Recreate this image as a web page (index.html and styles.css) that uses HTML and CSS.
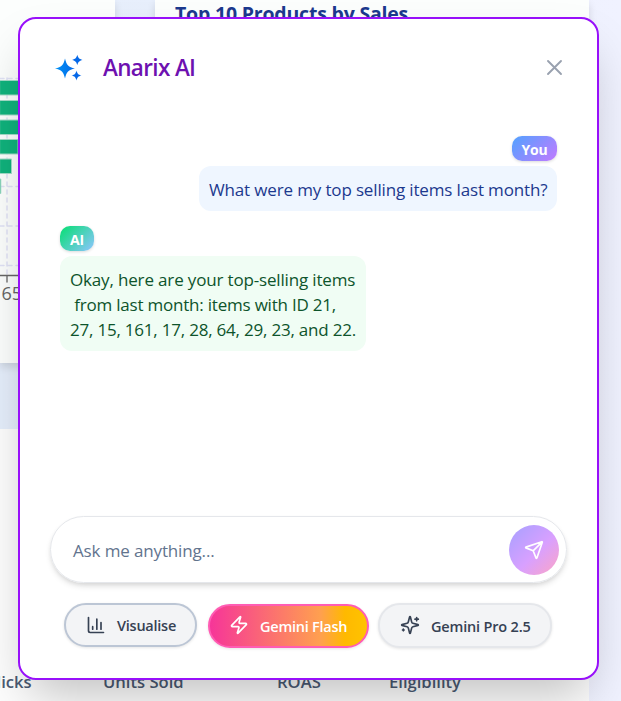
FILE: index.html
```html
<!DOCTYPE html>
<html lang="en">
<head>
<meta charset="utf-8">
<title>Anarix AI</title>
<link rel="stylesheet" href="styles.css">
</head>
<body>
<main class="dashboard">
  <div class="charts">
    <section class="card chart-card">
      <svg class="chart" width="115" height="363" viewBox="0 0 115 363">
        <g class="grid-lines">
          <path d="M0 78.500H115M0 186.500H115M0 226H115M0 265.500H115M7 78V275"/>
        </g>
        <g class="bars">
          <path d="M0 80.500h60v14.500H0zM0 100.500h40v14.500H0zM0 120h25v14.500H0zM0 139.500h18v14.500H0zM0 159h11.500v14.500H0zM0 179h.8v14.500H0z"/>
        </g>
        <path class="axis" d="M0 275.500H115M7 275.500V282"/>
        <text class="tick" x="1.500" y="299.500">65</text>
      </svg>
    </section>
    <section class="card product-card"><h2>Top 10 Products by Sales</h2></section>
  </div>
  <section class="card table-card">
    <div class="table-head"><span class="c-clicks">Clicks</span><span class="c-units">Units Sold</span><span class="c-roas">ROAS</span><span class="c-elig">Eligibility</span></div>
  </section>
</main>

<div class="modal" role="dialog">
  <header class="modal-head">
    <svg class="brand" width="30" height="28" viewBox="0 0 30 28">
      <defs><linearGradient id="blue" x1="0" x2="1" y1="0" y2="0"><stop offset="0" stop-color="#0092f5"/><stop offset="1" stop-color="#0568e8"/></linearGradient></defs>
      <path fill="url(#blue)" d="M11 4.500C12.600 11.300 14.300 13.200 21 14.500C14.300 15.900 12.600 17.800 11 24.500C9.400 17.800 7.700 15.900 1 14.500C7.700 13.200 9.400 11.300 11 4.500Z"/>
      <path fill="#0568e8" d="M23.300 .8C24.300 4.200 25 4.900 28.500 5.900C25 6.900 24.300 7.600 23.300 11C22.300 7.600 21.600 6.900 18.100 5.900C21.600 4.900 22.300 4.200 23.300 .8ZM22.500 16.500C23.400 19.900 24.100 20.600 27.500 21.500C24.100 22.400 23.400 23.100 22.500 26.500C21.600 23.100 20.900 22.400 17.500 21.500C20.900 20.600 21.600 19.900 22.500 16.500Z"/>
    </svg>
    <h1>Anarix AI</h1>
    <button class="close" aria-label="Close"><svg width="20" height="20" viewBox="0 0 20 20"><path d="M3 3L16 16M16 3L3 16"/></svg></button>
  </header>

  <div class="chat">
    <div class="message user">
      <span class="tag">You</span>
      <p class="bubble">What were my top selling items last month?</p>
    </div>
    <div class="message ai">
      <span class="tag">AI</span>
      <p class="bubble"><span class="l1">Okay, here are your top-selling items</span>
<span class="l2"> from last month: items with ID 21,</span>
<span class="l3">27, 15, 161, 17, 28, 64, 29, 23, and 22.</span></p>
    </div>
  </div>

  <div class="ask">
    <span class="placeholder">Ask me anything...</span>
    <button class="send" aria-label="Send"><svg width="20" height="20" viewBox="0 0 24 24"><path d="M14.536 21.686a.5.5 0 0 0 .937-.024l6.500-19a.496.496 0 0 0-.635-.635l-19 6.500a.5.5 0 0 0-.024.937l7.930 3.180a2 2 0 0 1 1.112 1.110zM21.854 2.147l-10.940 10.939"/></svg></button>
  </div>

  <div class="actions">
    <button class="pill visualise"><svg width="20" height="20" viewBox="0 0 24 24"><path d="M3 3v16a2 2 0 0 0 2 2h16M8 17v-3M13 17V5M18 17V9"/></svg><span>Visualise</span></button>
    <button class="pill flash"><svg width="20" height="20" viewBox="0 0 24 24"><path d="M4 14a1 1 0 0 1-.780-1.630l9.900-10.200a.5.5 0 0 1 .860.460l-1.920 6.020A1 1 0 0 0 13 10h7a1 1 0 0 1 .780 1.630l-9.900 10.200a.5.5 0 0 1-.860-.460l1.920-6.020A1 1 0 0 0 11 14z"/></svg><span>Gemini Flash</span></button>
    <button class="pill pro"><svg width="20" height="20" viewBox="0 0 24 24"><path d="M9.937 15.500A2 2 0 0 0 8.500 14.063l-6.135-1.582a.5.5 0 0 1 0-.962L8.500 9.936A2 2 0 0 0 9.937 8.500l1.582-6.135a.5.5 0 0 1 .963 0L14.063 8.500A2 2 0 0 0 15.500 9.937l6.135 1.581a.5.5 0 0 1 0 .964L15.500 14.063a2 2 0 0 0-1.437 1.437l-1.582 6.135a.5.5 0 0 1-.963 0zM20 3v4M22 5h-4M4 17v2M5 18H3"/></svg><span>Gemini Pro 2.5</span></button>
  </div>
</div>
</body>
</html>
```

FILE: styles.css
```css
* { box-sizing: border-box; }
body {
  margin: 0;
  width: 621px;
  height: 701px;
  overflow: hidden;
  position: relative;
  font-family: "Open Sans", "Noto Sans", sans-serif;
  background: linear-gradient(90deg, #e5eefb, #f0f2ff);
}
h1, h2, p { margin: 0; }
button { font: inherit; border: 0; padding: 0; background: none; }
svg { flex: none; display: block; }
svg path { stroke-linecap: round; stroke-linejoin: round; }

.dashboard { width: 589px; height: 701px; display: flex; flex-direction: column; gap: 66px; }
.charts { display: flex; height: 363px; gap: 40px; }
.card { background: #fcfefd; box-shadow: 0 4px 8px rgba(0, 0, 0, .12); }
.chart-card { width: 115px; }
.product-card { flex: 1; padding: 0 20px; }
.product-card h2 { font-size: 19.500px; line-height: 28px; font-weight: 700; color: #1c398e; letter-spacing: -.2px; white-space: nowrap; }
.table-card { flex: 1; padding-top: 241px; background: #fdfdfd; box-shadow: none; }
.table-head { display: grid; grid-template-columns: 110px 174px 112px 1fr; margin-left: -7px; font-size: 16.600px; line-height: 24px; font-weight: 600; color: #4a5a73; white-space: nowrap; }
.c-clicks { margin-left: -7px; }
.grid-lines path { fill: none; stroke: #e0e2f5; stroke-width: 1.500; stroke-dasharray: 4 4; }
.bars path { fill: #10b27c; stroke: #a5dcc9; stroke-width: 1; }
.axis { fill: none; stroke: #666; stroke-width: 1.300; }
.tick { font-size: 18px; fill: #666; }

.modal {
  position: absolute;
  left: 18px;
  top: 17px;
  width: 581px;
  height: 663px;
  padding: 30px;
  display: flex;
  flex-direction: column;
  background: #fff;
  border: 2px solid #9810fa;
  border-radius: 18px;
  box-shadow: 0 25px 50px -12px rgba(0, 0, 0, .25);
}
.modal-head { display: flex; align-items: center; height: 38px; padding: 0 2px 0 4px; }
.modal-head h1 { margin-left: 19px; font-size: 22.500px; line-height: 30px; font-weight: 600; letter-spacing: -.65px; color: #6e11b0; white-space: nowrap; }
.close { margin-left: auto; }
.close path { fill: none; stroke: #99a1af; stroke-width: 1.900; }

.chat { flex: 1; padding: 49px 10px 0; display: flex; flex-direction: column; gap: 15px; }
.message { display: flex; flex-direction: column; align-items: flex-start; gap: 5px; }
.message.user { align-items: flex-end; }
.tag {
  height: 25px;
  border-radius: 10px;
  display: flex;
  align-items: center;
  justify-content: center;
  padding-top: 1px;
  color: #fff;
  font-size: 14px;
  font-weight: 700;
  letter-spacing: -.2px;
  box-shadow: 0 1px 3px rgba(0, 0, 0, .15);
}
.user .tag { width: 45px; background: linear-gradient(135deg, #51a2ff, #c27aff); }
.ai .tag { width: 34px; background: linear-gradient(135deg, #05df72, #8ec5ff); }
.bubble { padding: 11px 10px 9px; border-radius: 12px; font-size: 17px; line-height: 25px; letter-spacing: -.15px; white-space: pre; }
.user .bubble { width: 358px; background: #eff6ff; color: #1c398e; }
.ai .bubble { width: 306px; background: #f0fdf4; color: #0d542b; }
.l1 { letter-spacing: -.16px; }
.l2, .l3 { letter-spacing: -.21px; }

.ask {
  height: 67px;
  border: 1px solid #e5e7eb;
  border-radius: 34px;
  padding: 0 7px 0 22px;
  display: flex;
  align-items: center;
  justify-content: space-between;
  box-shadow: 0 4px 6px -1px rgba(0, 0, 0, .12), 0 2px 4px -1px rgba(0, 0, 0, .08);
}
.placeholder { padding-top: 2px; font-size: 17px; letter-spacing: -.14px; color: #62748e; white-space: nowrap; }
.send { width: 50px; height: 50px; border-radius: 50%; display: grid; place-items: center; background: linear-gradient(135deg, #a6a0ff, #d8a0ff 55%, #fda5c5); }
.send path, .pill path { fill: none; stroke: currentColor; stroke-width: 2; }
.send { color: #fff; }

.actions { display: flex; gap: 9px; height: 65px; padding: 20px 14px 0; }
.pill {
  height: 44px;
  border: 2px solid #e5e7eb;
  border-radius: 22px;
  display: flex;
  align-items: center;
  gap: 11px;
  padding-left: 20px;
  font-size: 14.500px;
  font-weight: 600;
  letter-spacing: -.25px;
  color: #364153;
  background: #f3f4f6;
  white-space: nowrap;
  box-shadow: 0 1px 3px rgba(0, 0, 0, .1);
}
.visualise { width: 133px; border-color: #bcc6d5; margin-right: 2px; }
.flash { width: 161px; margin-top: 1px; padding-left: 19px; color: #fff; border-color: #ff5cb3; background: linear-gradient(90deg, #f6339a, #ffa04f 70%, #ffb900 85%, #ffc400); background-origin: border-box; }
.flash svg, .pro svg { position: relative; top: -1px; }
.pro { width: 174px; height: 45px; padding-top: 1px; letter-spacing: -.18px; }
```
